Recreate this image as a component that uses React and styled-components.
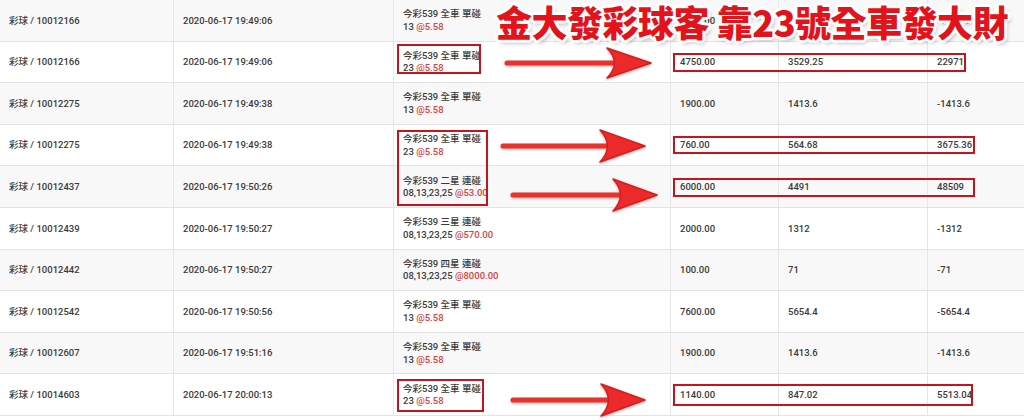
import React from 'react';
import styled, { createGlobalStyle } from 'styled-components';

/*
 * styled components
 */

const GlobalStyle = createGlobalStyle`
  html, body {
    margin: 0;
    padding: 0;
    background: #fff;
  }

  body {
    width: 1024px;
    height: 420px;
    overflow: hidden;
  }
`;

const Page = styled.div`
  position: relative;
  width: 1024px;
  height: 420px;
  overflow: hidden;
  font-family: Roboto, "Noto Sans CJK TC", sans-serif;
  font-size: 9.5px;
  font-weight: 500;
  color: #3a3a3a;
`;

const Table = styled.div`
  display: flex;
  flex-direction: column;
  margin-left: -1px;
`;

const Row = styled.div`
  display: grid;
  grid-template-columns: 174px 220px 277px 108px 149px 1fr;
  height: 41.6px;
  box-sizing: border-box;
  border-bottom: 1px solid #e3e3e3;
  background: ${(props) => (props.striped ? '#f8f8f8' : '#fff')};
`;

const Cell = styled.div`
  display: flex;
  flex-direction: column;
  justify-content: center;
  padding-left: 9px;
  padding-top: 1px;
  border-left: 1px solid #e6e6e6;
  line-height: 12.5px;
  white-space: nowrap;
`;

const Odds = styled.span`
  color: #d8423c;
`;

const Overlay = styled.div`
  position: absolute;
  inset: 0;
  pointer-events: none;
`;

const Title = styled.div`
  position: absolute;
  left: 496px;
  top: 0;
  font-family: "Noto Sans CJK TC", "Noto Sans CJK SC", sans-serif;
  font-size: 36px;
  font-weight: 900;
  line-height: 42px;
  letter-spacing: -0.5px;
  color: #e3131b;
  white-space: nowrap;
  text-shadow:
    2px 0 0 #fff, -2px 0 0 #fff, 0 2px 0 #fff, 0 -2px 0 #fff,
    2px 2px 0 #fff, -2px -2px 0 #fff, 2px -2px 0 #fff, -2px 2px 0 #fff,
    3px 0 1px #fff, -3px 0 1px #fff, 0 3px 1px #fff, 0 -3px 1px #fff,
    2px 3px 4px rgba(0, 0, 0, 0.35);
`;

const Frame = styled.div`
  position: absolute;
  box-sizing: border-box;
  border: 2px solid #c5141b;
`;

const ArrowSvg = styled.svg`
  position: absolute;
  left: 0;
  top: 0;
  overflow: visible;
`;

/*
 * data
 */

const ROWS = [
  ['10012166', '19:49:06', '全車 單碰', '13', '@5.58', '1900.00', '1413.6', '-1413.6'],
  ['10012166', '19:49:06', '全車 單碰', '23', '@5.58', '4750.00', '3529.25', '22971'],
  ['10012275', '19:49:38', '全車 單碰', '13', '@5.58', '1900.00', '1413.6', '-1413.6'],
  ['10012275', '19:49:38', '全車 單碰', '23', '@5.58', '760.00', '564.68', '3675.36'],
  ['10012437', '19:50:26', '二星 連碰', '08,13,23,25', '@53.00', '6000.00', '4491', '48509'],
  ['10012439', '19:50:27', '三星 連碰', '08,13,23,25', '@570.00', '2000.00', '1312', '-1312'],
  ['10012442', '19:50:27', '四星 連碰', '08,13,23,25', '@8000.00', '100.00', '71', '-71'],
  ['10012542', '19:50:56', '全車 單碰', '13', '@5.58', '7600.00', '5654.4', '-5654.4'],
  ['10012607', '19:51:16', '全車 單碰', '13', '@5.58', '1900.00', '1413.6', '-1413.6'],
  ['10014603', '20:00:13', '全車 單碰', '23', '@5.58', '1140.00', '847.02', '5513.04'],
];

// [left, top, width, height]
const FRAMES = [
  [397, 44, 84, 30],
  [397, 130, 91, 76],
  [397, 379, 87, 33],
  [673, 53, 293, 19],
  [673, 136, 302, 18],
  [673, 178, 302, 19],
  [673, 384, 300, 22],
];

// [shaftStart, headBack, tip, y, halfHeight]
const ARROWS = [
  [507, 609, 651, 63, 15],
  [503, 602, 645, 146, 16],
  [513, 615, 657, 195, 16],
  [513, 603, 645, 400, 16],
];

function Arrow({ x1, back, tip, y, half }) {
  const notch = back + 13;
  const head = `M ${back - 2} ${y - half} L ${tip} ${y} L ${back - 2} ${y + half} Q ${notch} ${y} ${back - 2} ${y - half} Z`;
  return (
    <g>
      <line x1={x1} y1={y} x2={notch} y2={y} stroke="#e8312f" strokeWidth="5" strokeLinecap="round" />
      <path d={head} fill="#ec2a2a" stroke="#d61e1e" strokeWidth="1.5" strokeLinejoin="round" />
    </g>
  );
}

export default function App() {
  return (
    <Page>
      <GlobalStyle />
      <Table>
        {ROWS.map(([id, time, kind, nums, odds, bet, pay, win], i) => (
          <Row key={id + time + nums} striped={i % 2 === 0}>
            <Cell>{`彩球 / ${id}`}</Cell>
            <Cell>{`2020-06-17 ${time}`}</Cell>
            <Cell>
              <div>{`今彩539 ${kind}`}</div>
              <div>
                {`${nums} `}
                <Odds>{odds}</Odds>
              </div>
            </Cell>
            <Cell>{bet}</Cell>
            <Cell>{pay}</Cell>
            <Cell>{win}</Cell>
          </Row>
        ))}
      </Table>
      <Overlay>
        {FRAMES.map(([left, top, width, height]) => (
          <Frame key={`${left}-${top}`} style={{ left, top, width, height }} />
        ))}
        <ArrowSvg width="1024" height="420" viewBox="0 0 1024 420">
          <defs>
            <filter id="soft" x="-10%" y="-50%" width="120%" height="200%">
              <feDropShadow dx="0" dy="1" stdDeviation="1" floodColor="#a00" floodOpacity="0.35" />
            </filter>
          </defs>
          <g filter="url(#soft)">
            {ARROWS.map(([x1, back, tip, y, half]) => (
              <Arrow key={y} x1={x1} back={back} tip={tip} y={y} half={half} />
            ))}
          </g>
        </ArrowSvg>
        <Title>金大發彩球客 靠23號全車發大財</Title>
      </Overlay>
    </Page>
  );
}
